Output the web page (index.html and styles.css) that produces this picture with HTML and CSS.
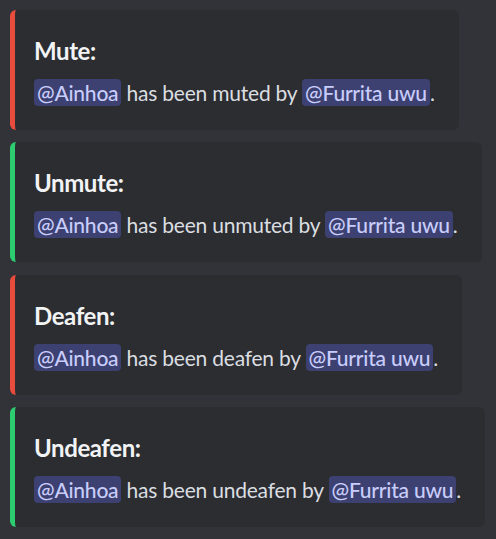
FILE: index.html
```html
<!DOCTYPE html>
<html>
<head>
<meta charset="utf-8">
<link rel="stylesheet" href="styles.css">
</head>
<body>
<div class="feed">
  <div class="embed red">
    <div class="title">Mute:</div>
    <div class="desc"><span class="mention">@Ainhoa</span> has been muted by <span class="mention">@Furrita uwu</span>.</div>
  </div>
  <div class="embed green">
    <div class="title">Unmute:</div>
    <div class="desc"><span class="mention">@Ainhoa</span> has been unmuted by <span class="mention">@Furrita uwu</span>.</div>
  </div>
  <div class="embed red">
    <div class="title">Deafen:</div>
    <div class="desc"><span class="mention">@Ainhoa</span> has been deafen by <span class="mention">@Furrita uwu</span>.</div>
  </div>
  <div class="embed green">
    <div class="title">Undeafen:</div>
    <div class="desc"><span class="mention">@Ainhoa</span> has been undeafen by <span class="mention">@Furrita uwu</span>.</div>
  </div>
</div>
</body>
</html>
```
FILE: styles.css
```css
html, body {
  margin: 0;
  padding: 0;
  background: #313338;
}
body {
  font-family: Lato, "Noto Sans", sans-serif;
}
.feed {
  display: flex;
  flex-direction: column;
  align-items: flex-start;
  gap: 12.3px;
  padding: 10px 10px;
}
.embed {
  background: #2b2d31;
  border-left: 5px solid #e74c3c;
  border-radius: 6px;
  padding: 12px 24px 24px 19px;
}
.embed.red { border-left-color: #e74c3c; }
.embed.green { border-left-color: #2ecc71; }
.title {
  margin-top: 12px;
  font-size: 24px;
  line-height: 33px;
  font-weight: 700;
  letter-spacing: -0.4px;
  color: #f2f3f5;
}
.desc {
  margin-top: 12px;
  font-size: 21px;
  line-height: 27px;
  letter-spacing: -0.22px;
  color: #dbdee1;
  white-space: nowrap;
}
.mention {
  display: inline-block;
  background: #3c4172;
  color: #c9cdfb;
  padding: 0 3px;
  border-radius: 4px;
  font-weight: 500;
}
```
